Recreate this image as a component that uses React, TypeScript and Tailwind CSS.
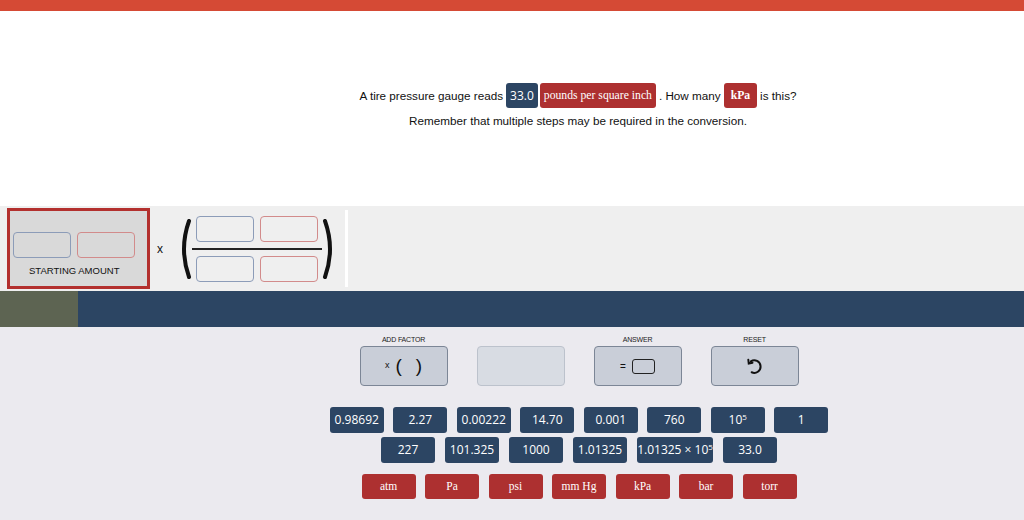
const sans = { fontFamily: '"Liberation Sans", Arial, sans-serif' };

const row1 = ["0.98692", "2.27", "0.00222", "14.70", "0.001", "760", "10^5", "1"];
const row2 = ["227", "101.325", "1000", "1.01325", "1.01325 x 10^5", "33.0"];
const units = ["atm", "Pa", "psi", "mm Hg", "kPa", "bar", "torr"];

function NumLabel({ value }: { value: string }) {
  if (value === "10^5") {
    return (
      <span>
        10<sup className="text-[8px]">5</sup>
      </span>
    );
  }
  if (value === "1.01325 x 10^5") {
    return (
      <span>
        1.01325 × 10<sup className="text-[8px]">5</sup>
      </span>
    );
  }
  return <span>{value}</span>;
}

function NumButton({ value }: { value: string }) {
  const wide = value.includes("x");
  return (
    <button
      className={`flex h-[26px] items-center justify-center rounded-[3px] bg-[#2c4563] font-['Open_Sans',sans-serif] text-[12px] text-white ${wide ? "w-[76px]" : "w-[54px]"}`}
    >
      <NumLabel value={value} />
    </button>
  );
}

function UnitButton({ label }: { label: string }) {
  return (
    <button className="flex h-[25px] w-[54px] items-center justify-center rounded-[3px] bg-[#ad3030] font-['Liberation_Serif',serif] text-[11.5px] text-white">
      {label}
    </button>
  );
}

function Slot({ tone }: { tone: "blue" | "red" }) {
  return (
    <div
      className={`h-[26px] w-[58px] rounded-[4px] border ${tone === "blue" ? "border-[#8c9cb8]" : "border-[#d28b8b]"}`}
    />
  );
}

function Paren({ flip }: { flip?: boolean }) {
  return (
    <svg width="14" height="60" viewBox="0 0 14 60" className={flip ? "-scale-x-100" : ""}>
      <path d="M11 2 Q1 30 11 58" fill="none" stroke="#111" strokeWidth="4" strokeLinecap="round" />
    </svg>
  );
}

function Control({ label, disabled, children }: { label: string; disabled?: boolean; children?: React.ReactNode }) {
  return (
    <div className="flex w-[88px] flex-col items-center">
      <div className="h-[13px] text-[7px] leading-[13px] tracking-tight text-[#222]" style={sans}>
        {label}
      </div>
      <button
        className={`flex h-[40px] w-[88px] items-center justify-center rounded-[4px] border ${disabled ? "border-[#bcc2cc] bg-[#d8dce3]" : "border-[#7c8696] bg-[#c9ced8]"}`}
      >
        {children}
      </button>
    </div>
  );
}

export default function App() {
  return (
    <div className="flex h-[520px] w-[1024px] flex-col overflow-hidden bg-white" style={sans}>
      <div className="h-[11px] bg-[#d54a35]" />

      <div className="flex h-[195px] flex-col items-center pl-[132px] pt-[72px] text-[11.7px] text-[#111]">
        <div className="flex items-center">
          <span>A tire pressure gauge reads</span>
          <span className="ml-[3px] flex h-[25px] items-center rounded-[3px] bg-[#2c4563] px-[4px] font-['Open_Sans',sans-serif] text-[12px] text-white">
            33.0
          </span>
          <span className="ml-[2px] flex h-[25px] items-center rounded-[3px] bg-[#ad3030] px-[4px] font-['Liberation_Serif',serif] text-[11.7px] text-white">
            pounds per square inch
          </span>
          <span className="ml-[3px]">. How many</span>
          <span className="ml-[3px] flex h-[25px] items-center rounded-[3px] bg-[#ad3030] px-[7px] font-['Liberation_Serif',serif] text-[11.7px] font-bold text-white">
            kPa
          </span>
          <span className="ml-[3px]">is this?</span>
        </div>
        <div className="mt-[4px]">Remember that multiple steps may be required in the conversion.</div>
      </div>

      <div className="flex h-[85px] items-center bg-[#efefef] pl-[7px]">
        <div className="flex h-[81px] w-[143px] flex-col items-start border-[3px] border-[#b3302e] bg-[#d9d9d9] pt-[21px]">
          <div className="ml-[3px] flex gap-[6px]">
            <Slot tone="blue" />
            <Slot tone="red" />
          </div>
          <div className="ml-[19px] mt-[6px] text-[9.5px] text-[#111]">STARTING AMOUNT</div>
        </div>
        <span className="ml-[7px] text-[12px] text-[#111]">x</span>
        <div className="ml-[15px] flex items-center">
          <Paren />
          <div className="flex flex-col items-center">
            <div className="flex gap-[6px] px-[2px]">
              <Slot tone="blue" />
              <Slot tone="red" />
            </div>
            <div className="my-[6px] h-[2px] w-[130px] bg-[#222]" />
            <div className="flex gap-[6px] px-[2px]">
              <Slot tone="blue" />
              <Slot tone="red" />
            </div>
          </div>
          <Paren flip />
        </div>
        <div className="ml-[9px] h-[77px] w-[3px] bg-white" />
      </div>

      <div className="flex h-[36px]">
        <div className="w-[78px] bg-[#5d6452]" />
        <div className="flex-1 bg-[#2c4563]" />
      </div>

      <div className="flex flex-1 flex-col items-center bg-[#ebeaef] pl-[134px] pt-[6px]">
        <div className="flex gap-[29px]">
          <Control label="ADD FACTOR">
            <span className="flex items-center text-[#111]">
              <span className="mr-[6px] text-[9px] text-[#111]">x</span>
              <span className="text-[19px] font-light">(</span>
              <span className="ml-[14px] text-[19px] font-light">)</span>
            </span>
          </Control>
          <Control label="" disabled />
          <Control label="ANSWER">
            <span className="flex items-center text-[#111]">
              <span className="mr-[6px] text-[10px]">=</span>
              <span className="h-[15px] w-[23px] rounded-[3px] border border-[#222]" />
            </span>
          </Control>
          <Control label="RESET">
            <svg width="20" height="20" viewBox="0 0 24 24" fill="none" stroke="#111" strokeWidth="2.4" strokeLinecap="round">
              <path d="M7 6.5 A7.5 7.5 0 1 1 8 19.5" />
              <path d="M4 4.5 L4.5 9 L9 8" />
            </svg>
          </Control>
        </div>

        <div className="mt-[21px] flex gap-[9.5px]">
          {row1.map((v) => (
            <NumButton key={v} value={v} />
          ))}
        </div>
        <div className="mt-[4px] flex gap-[10px]">
          {row2.map((v) => (
            <NumButton key={v} value={v} />
          ))}
        </div>
        <div className="mt-[11px] flex gap-[9.5px]">
          {units.map((u) => (
            <UnitButton key={u} label={u} />
          ))}
        </div>
      </div>
    </div>
  );
}
